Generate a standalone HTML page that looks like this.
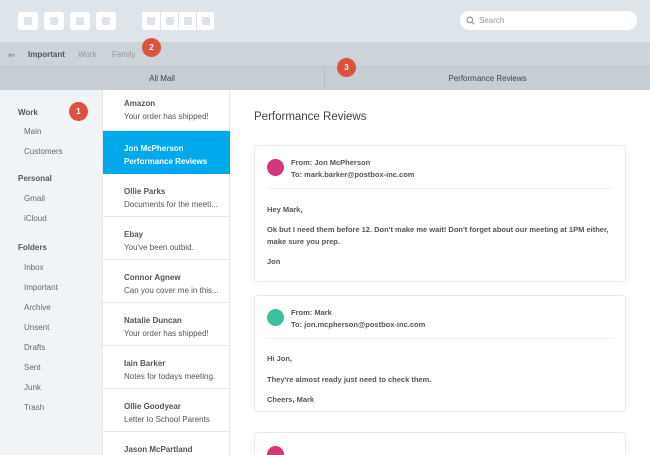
<!DOCTYPE html><html style="overflow:hidden;width:650px;height:455px"><head><style>
*{margin:0;padding:0;box-sizing:border-box}
body{width:650px;height:455px;overflow:hidden;font-family:"Liberation Sans",sans-serif;background:#fff;position:relative;color:#555}
.a{position:absolute}
.btn{position:absolute;top:12px;width:20px;height:18px;background:#fff;border-radius:3px}
.btn:after{content:"";position:absolute;left:6px;top:5px;width:8px;height:8px;background:#dde3e8;border-radius:1px}
.seg{position:absolute;top:12px;width:18px;height:18px;background:#fff}
.seg:after{content:"";position:absolute;left:5px;top:5px;width:8px;height:8px;background:#dde3e8}
.badge{position:absolute;width:19px;height:19px;border-radius:50%;background:#d9533f;color:#fff;font-size:8px;font-weight:bold;text-align:center;line-height:19px}
.sb{position:absolute;font-size:8px;color:#666}
.sb.h{font-weight:bold;color:#555;left:18px}
.sb.i{left:24px}
.it{position:absolute;left:103px;width:127px;height:43px;border-bottom:1px solid #e6eaee;font-size:8px;padding:11px 0 0 21px;line-height:13px}
.it b{display:block;color:#555}
.it span{color:#555}
.card{position:absolute;left:254px;width:372px;border:1px solid #e8ebee;border-radius:3px;font-size:7.5px;color:#555}
.av{position:absolute;left:12px;top:13px;width:17px;height:17px;border-radius:50%}
.hd{position:absolute;left:36px;top:11px;line-height:12px;font-weight:bold;color:#555}
.ln{position:absolute;left:12px;right:12px;top:42px;border-top:1px solid #eef0f2}
.bd{position:absolute;left:12px;right:12px;font-weight:bold;line-height:12px}
</style></head><body>
<div class="a" style="left:0;top:0;width:650px;height:42px;background:#dde4ea"></div>
<div class="btn" style="left:18px"></div><div class="btn" style="left:44px"></div><div class="btn" style="left:70px"></div><div class="btn" style="left:96px"></div>
<div class="a" style="left:142px;top:12px;width:72px;height:18px;background:#fff;border-radius:3px"></div>
<div class="seg" style="left:142px;border-radius:3px 0 0 3px"></div><div class="seg" style="left:160px;border-left:1px solid #dde3e8"></div><div class="seg" style="left:178px;border-left:1px solid #dde3e8"></div><div class="seg" style="left:196px;border-left:1px solid #dde3e8;border-radius:0 3px 3px 0"></div>
<div class="a" style="left:460px;top:11px;width:177px;height:19px;background:#fff;border-radius:10px;font-size:8px;color:#999;padding:5px 0 0 19px">Search</div>
<svg class="a" style="left:466px;top:16px" width="9" height="9"><circle cx="3.8" cy="3.8" r="2.8" fill="none" stroke="#999" stroke-width="1.2"/><path d="M6 6l2.3 2.3" stroke="#999" stroke-width="1.2"/></svg>
<div class="a" style="left:0;top:42px;width:650px;height:24px;background:#ccd3d9"></div>
<div class="a" style="left:8px;top:50px;font-size:9px;color:#777">&#8656;</div>
<div class="a" style="left:28px;top:50px;font-size:8px;color:#555;font-weight:bold">Important</div>
<div class="a" style="left:78px;top:50px;font-size:8px;color:#999">Work</div>
<div class="a" style="left:112px;top:50px;font-size:8px;color:#999">Family</div>
<div class="a" style="left:0;top:66px;width:650px;height:24px;background:#c6cdd3;border-top:1px solid #bfc6cc"></div>
<div class="a" style="left:324px;top:66px;width:1px;height:24px;background:#b5bcc2"></div>
<div class="a" style="left:0;top:74px;width:324px;text-align:center;font-size:8px;color:#444">All Mail</div>
<div class="a" style="left:325px;top:74px;width:325px;text-align:center;font-size:8px;color:#444">Performance Reviews</div>
<div class="a" style="left:0;top:90px;width:103px;height:365px;background:#f1f4f7;border-right:1px solid #e3e7eb"></div>
<div class="a" style="left:229px;top:90px;width:1px;height:365px;background:#e3e7eb"></div>
<div class="badge" style="left:142px;top:38px">2</div>
<div class="badge" style="left:337px;top:58px">3</div>
<div class="badge" style="left:69px;top:102px">1</div>
<div class="sb h" style="top:108px">Work</div>
<div class="sb i" style="top:127px">Main</div>
<div class="sb i" style="top:147px">Customers</div>
<div class="sb h" style="top:174px">Personal</div>
<div class="sb i" style="top:194px">Gmail</div>
<div class="sb i" style="top:214px">iCloud</div>
<div class="sb h" style="top:243px">Folders</div>
<div class="sb i" style="top:263px">Inbox</div>
<div class="sb i" style="top:283px">Important</div>
<div class="sb i" style="top:303px">Archive</div>
<div class="sb i" style="top:323px">Unsent</div>
<div class="sb i" style="top:343px">Drafts</div>
<div class="sb i" style="top:363px">Sent</div>
<div class="sb i" style="top:383px">Junk</div>
<div class="sb i" style="top:403px">Trash</div>
<div class="it" style="top:89px;padding-top:8px;height:42px"><b>Amazon</b><span>Your order has shipped!</span></div>
<div class="it" style="top:131px;background:#00a9eb;border:0"><b style="color:#fff">Jon McPherson</b><span style="color:#fff;font-weight:bold">Performance Reviews</span></div>
<div class="it" style="top:174px"><b>Ollie Parks</b><span>Documents for the meeti...</span></div>
<div class="it" style="top:217px"><b>Ebay</b><span>You've been outbid.</span></div>
<div class="it" style="top:260px"><b>Connor Agnew</b><span>Can you cover me in this...</span></div>
<div class="it" style="top:303px"><b>Natalie Duncan</b><span>Your order has shipped!</span></div>
<div class="it" style="top:346px"><b>Iain Barker</b><span>Notes for todays meeting.</span></div>
<div class="it" style="top:389px"><b>Ollie Goodyear</b><span>Letter to School Parents</span></div>
<div class="it" style="top:432px;height:23px;border:0"><b>Jason McPartland</b></div>
<div class="a" style="left:254px;top:111px;font-size:11.5px;color:#444">Performance Reviews</div>
<div class="card" style="top:145px;height:137px">
<div class="av" style="background:#d4357f"></div>
<div class="hd">From: Jon McPherson<br>To: mark.barker@postbox-inc.com</div>
<div class="ln"></div>
<div class="bd" style="top:58px">Hey Mark,</div>
<div class="bd" style="top:78px">Ok but I need them before 12. Don't make me wait! Don't forget about our meeting at 1PM either, make sure you prep.</div>
<div class="bd" style="top:110px">Jon</div>
</div>
<div class="card" style="top:295px;height:117px">
<div class="av" style="background:#3fbf9f"></div>
<div class="hd">From: Mark<br>To: jon.mcpherson@postbox-inc.com</div>
<div class="ln"></div>
<div class="bd" style="top:57px">Hi Jon,</div>
<div class="bd" style="top:78px">They're almost ready just need to check them.</div>
<div class="bd" style="top:98px">Cheers, Mark</div>
</div>
<div class="card" style="top:432px;height:23px;border-bottom:0;border-radius:3px 3px 0 0">
<div class="av" style="background:#d4357f"></div>
</div>
</body></html>
